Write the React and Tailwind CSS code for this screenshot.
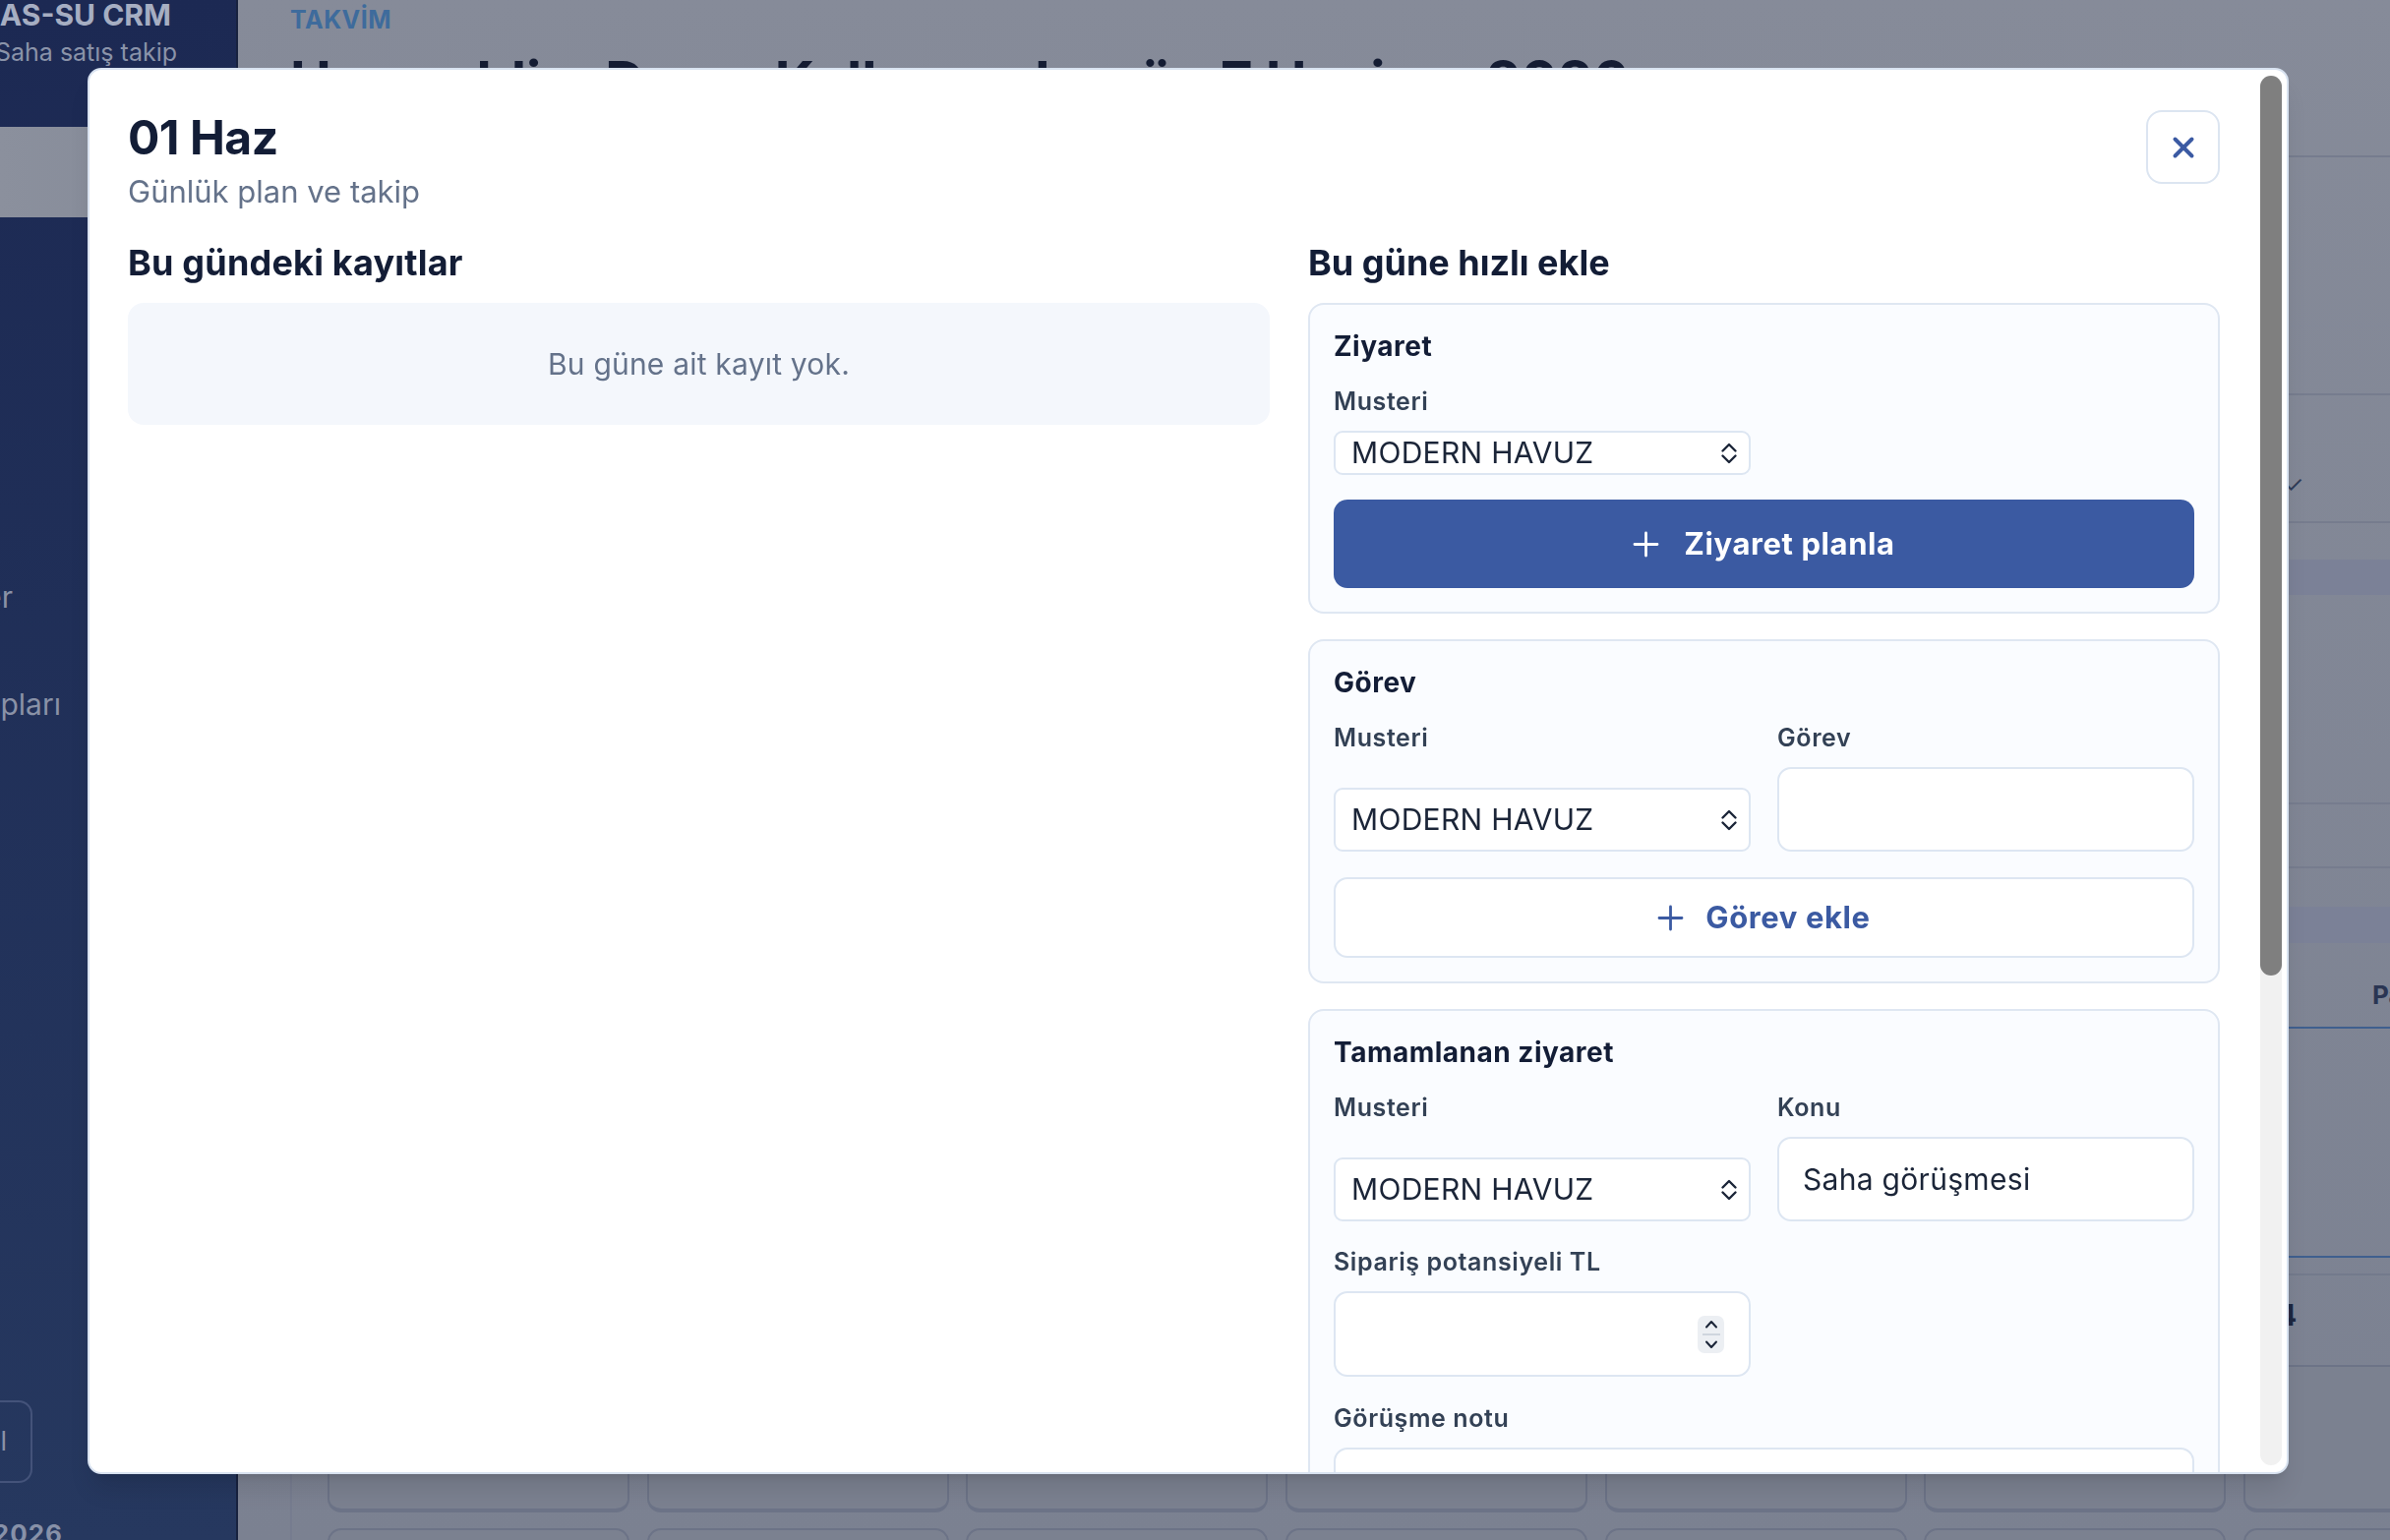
import React from 'react';
import { X } from 'lucide-react';

// up/down carets used by the customer selects
const UpDown = () => (
  <svg width="18" height="24" viewBox="0 0 18 24" fill="none" stroke="currentColor" strokeWidth="2.4" strokeLinecap="round" strokeLinejoin="round" className="shrink-0">
    <path d="M2.5 9.5 9 3l6.5 6.5" />
    <path d="M2.5 14.5 9 21l6.5-6.5" />
  </svg>
);

const PlusIcon = () => (
  <svg width="27" height="27" viewBox="0 0 27 27" fill="none" stroke="currentColor" strokeWidth="2.8" strokeLinecap="round" className="shrink-0">
    <path d="M13.5 2v23M2 13.5h23" />
  </svg>
);

const NumberSpinner = () => (
  <div className="w-[27px] h-[38px] rounded-[7px] bg-[#eceff3] flex flex-col items-center justify-between py-[4px] text-[#1b2538]">
    <svg width="14" height="9" viewBox="0 0 14 9" fill="none" stroke="currentColor" strokeWidth="2" strokeLinecap="round" strokeLinejoin="round">
      <path d="M2 7.5 7 2l5 5.5" />
    </svg>
    <div className="w-[18px] h-[2px] bg-[#cfd5de]" />
    <svg width="14" height="9" viewBox="0 0 14 9" fill="none" stroke="currentColor" strokeWidth="2" strokeLinecap="round" strokeLinejoin="round">
      <path d="M2 1.5 7 7l5-5.5" />
    </svg>
  </div>
);

const Field = ({ label, children }) => (
  <label className="flex flex-col gap-[14px]">
    <span className="text-[25px] leading-[32px] font-semibold tracking-[0.6px] text-[#334155]">{label}</span>
    {children}
  </label>
);

const CustomerSelect = ({ tall }) => (
  <div
    className={`mt-auto flex items-center justify-between rounded-[9px] border-2 border-[#dde6f2] bg-white pl-[16px] pr-[11px] text-[30px] tracking-[0.3px] text-[#1b2538] ${
      tall ? 'h-[65px]' : 'h-[45px]'
    }`}
  >
    <span>MODERN HAVUZ</span>
    <UpDown />
  </div>
);

const TextInput = ({ value }) => (
  <div className="h-[86px] flex items-center rounded-[14px] border-2 border-[#dde6f2] bg-white px-[24px] text-[30px] tracking-[0.3px] text-[#1b2538]">
    {value}
  </div>
);

const Card = ({ title, children }) => (
  <div className="rounded-[16px] border-2 border-[#dfe7f2] bg-[#fafcff] p-[24px]">
    <h4 className="text-[28px] leading-[36px] font-bold tracking-[0.5px] text-[#131d36]">{title}</h4>
    {children}
  </div>
);

const Sidebar = () => (
  <aside className="w-[242px] shrink-0 h-full flex flex-col overflow-hidden bg-gradient-to-b from-[#1c2953] to-[#26385f] border-r-2 border-[#18223f]">
    <div className="flex justify-end w-[174px] -mt-[3px] whitespace-nowrap text-[30px] leading-[36px] font-bold text-[#a6aec2]">
      HAVUZ AS-SU CRM
    </div>
    <div className="flex justify-end w-[180px] mt-[5px] whitespace-nowrap text-[25px] leading-[30px] text-[#8a93a9]">
      Saha satış takip
    </div>
    <div className="mt-[61px] h-[92px] w-[220px] rounded-r-[14px] bg-gradient-to-r from-[#8b909d] to-[#848a98]" />
    <nav className="mt-[368px] flex flex-col gap-[73px] text-[30px] leading-[36px] text-[#8a92a7]">
      <div className="flex justify-end w-[13px] whitespace-nowrap">Müşteriler</div>
      <div className="flex justify-end w-[62px] whitespace-nowrap">Cari Hesapları</div>
    </nav>
    <div className="mt-auto mb-[36px] w-[33px] h-[84px] rounded-r-[14px] border-2 border-l-0 border-[#44537a] flex items-center justify-end pr-[24px] whitespace-nowrap text-[27px] text-[#8a92a7]">
      Profil
    </div>
    <div className="flex justify-end w-[64px] -mb-[10px] whitespace-nowrap text-[26px] leading-[32px] font-bold tracking-[1px] text-[#8791a8]">
      Haziran 2026
    </div>
  </aside>
);

const Backdrop = () => (
  <main className="flex-1 min-w-0 h-full flex flex-col overflow-hidden bg-gradient-to-b from-[#868b99] to-[#7b8191]">
    <header className="h-[160px] shrink-0 border-b-2 border-[#767c8e] pl-[53px] pt-[4px]">
      <div className="text-[25px] leading-[32px] font-bold tracking-[0.5px] text-[#3e6b9c]">TAKVİM</div>
      <h1 className="mt-[15px] text-[56px] leading-[64px] font-bold whitespace-nowrap text-[#141c33]">
        Hoş geldin, Demo Kullanıcı, bugün 7 Haziran 2026
      </h1>
    </header>
    <div className="h-[242px] shrink-0 border-b-2 border-[#767c8e]" />
    <div className="h-[130px] shrink-0 border-b-2 border-[#767c8e] pl-[2079px] pt-[76px] text-[24px] leading-[30px] text-[#2f3b57]">
      ✓
    </div>
    <div className="mt-[37px] h-[36px] shrink-0 bg-[#7b8197]" />
    <div className="h-[213px] shrink-0 border-b-2 border-[#767c8e]" />
    <div className="h-[65px] shrink-0 border-b-2 border-[#767c8e]" />
    <div className="mt-[39px] h-[37px] shrink-0 bg-[#7b8197]" />
    <div className="h-[87px] shrink-0 border-b-2 border-[#3f5f8e] pl-[2170px] pt-[36px] whitespace-nowrap text-[26px] leading-[34px] font-bold text-[#2a3553]">
      Pazartesi
    </div>
    <div className="h-[233px] shrink-0 border-b-2 border-[#3f5f8e]" />
    <div className="mt-[16px] shrink-0 border-t-2 border-[#737a8c] pl-[2073px] pt-[22px] text-[30px] leading-[36px] font-bold text-[#1d2740]">
      4
    </div>
    <div className="mt-[33px] ml-[53px] shrink-0 border-l-2 border-[#767c8f] pl-[36px] flex-1">
      <div className="grid grid-cols-[repeat(7,307px)] gap-x-[17.7px] gap-y-[16px]">
        {Array.from({ length: 14 }).map((_, i) => (
          <div key={i} className="h-[150px] rounded-[14px] border-2 border-b-[4px] border-[#6c7387] bg-[#7b8190]" />
        ))}
      </div>
    </div>
  </main>
);

const DayModal = () => (
  <div className="fixed inset-0 pl-[89px] pt-[69px]">
    <div className="w-[2238px] h-[1430px] flex overflow-hidden rounded-[14px] border-2 border-[#d8e2f0] bg-white shadow-xl">
      <div className="flex-1 min-w-0 overflow-hidden pl-[39px] pr-[41px] pt-[41px]">
        {/* Header */}
        <div className="flex items-start justify-between">
          <div>
            <h2 className="text-[48px] leading-[56px] font-bold tracking-[-0.5px] text-[#131d36]">01 Haz</h2>
            <p className="mt-[4px] text-[31px] leading-[46px] text-[#64728a]">Günlük plan ve takip</p>
          </div>
          <button className="w-[75px] h-[75px] rounded-[16px] border-2 border-[#dce5f1] bg-white flex items-center justify-center text-[#3b5aa3]">
            <X size={34} strokeWidth={2.8} />
          </button>
        </div>

        <div className="mt-[27px] grid grid-cols-[1fr_927px] gap-[39px] items-start">
          {/* Records of the day */}
          <section>
            <h3 className="text-[36px] leading-[44px] font-bold tracking-[0.2px] text-[#131d36]">Bu gündeki kayıtlar</h3>
            <div className="mt-[19px] h-[124px] rounded-[16px] bg-[#f4f7fc] flex items-center justify-center text-[30px] tracking-[0.2px] text-[#64728a]">
              Bu güne ait kayıt yok.
            </div>
          </section>

          {/* Quick add */}
          <section>
            <h3 className="text-[36px] leading-[44px] font-bold text-[#131d36]">Bu güne hızlı ekle</h3>
            <div className="mt-[19px] flex flex-col gap-[26px]">
              <Card title="Ziyaret">
                <div className="mt-[22px] grid grid-cols-2 gap-x-[27px]">
                  <Field label="Musteri">
                    <CustomerSelect />
                  </Field>
                </div>
                <button className="mt-[25px] w-full h-[90px] rounded-[14px] bg-[#3b5aa2] text-white flex items-center justify-center gap-[25px] text-[31px] font-bold tracking-[0.6px]">
                  <PlusIcon />
                  <span>Ziyaret planla</span>
                </button>
              </Card>

              <Card title="Görev">
                <div className="mt-[22px] grid grid-cols-2 gap-x-[27px]">
                  <Field label="Musteri">
                    <CustomerSelect tall />
                  </Field>
                  <Field label="Görev">
                    <TextInput value="" />
                  </Field>
                </div>
                <button className="mt-[26px] w-full h-[82px] rounded-[14px] border-2 border-[#dde6f2] bg-white text-[#3b5aa2] flex items-center justify-center gap-[22px] text-[31px] font-bold tracking-[0.6px]">
                  <PlusIcon />
                  <span>Görev ekle</span>
                </button>
              </Card>

              <Card title="Tamamlanan ziyaret">
                <div className="mt-[22px] grid grid-cols-2 gap-x-[27px]">
                  <Field label="Musteri">
                    <CustomerSelect tall />
                  </Field>
                  <Field label="Konu">
                    <TextInput value="Saha görüşmesi" />
                  </Field>
                </div>
                <div className="mt-[25px] grid grid-cols-2 gap-x-[27px]">
                  <Field label="Sipariş potansiyeli TL">
                    <div className="h-[87px] flex items-center justify-end rounded-[14px] border-2 border-[#dde6f2] bg-white pr-[25px]">
                      <NumberSpinner />
                    </div>
                  </Field>
                </div>
                <div className="mt-[26px]">
                  <Field label="Görüşme notu">
                    <div className="h-[170px] rounded-[14px] border-2 border-[#dde6f2] bg-white" />
                  </Field>
                </div>
                <button className="mt-[26px] w-full h-[90px] rounded-[14px] bg-[#3b5aa2] text-white text-[31px] font-bold">
                  Tamamlandı olarak kaydet
                </button>
              </Card>
            </div>
          </section>
        </div>
      </div>

      {/* scrollbar */}
      <div className="w-[22px] shrink-0 mt-[6px] mb-[7px] mr-[5px] rounded-full bg-[#f1f1f1] flex flex-col">
        <div className="h-[915px] rounded-full bg-[#7f7f7f]" />
      </div>
    </div>
  </div>
);

export default function App() {
  return (
    <div className="relative w-[2430px] h-[1566px] overflow-hidden flex font-[family-name:Inter,sans-serif]">
      <Sidebar />
      <Backdrop />
      <DayModal />
    </div>
  );
}
